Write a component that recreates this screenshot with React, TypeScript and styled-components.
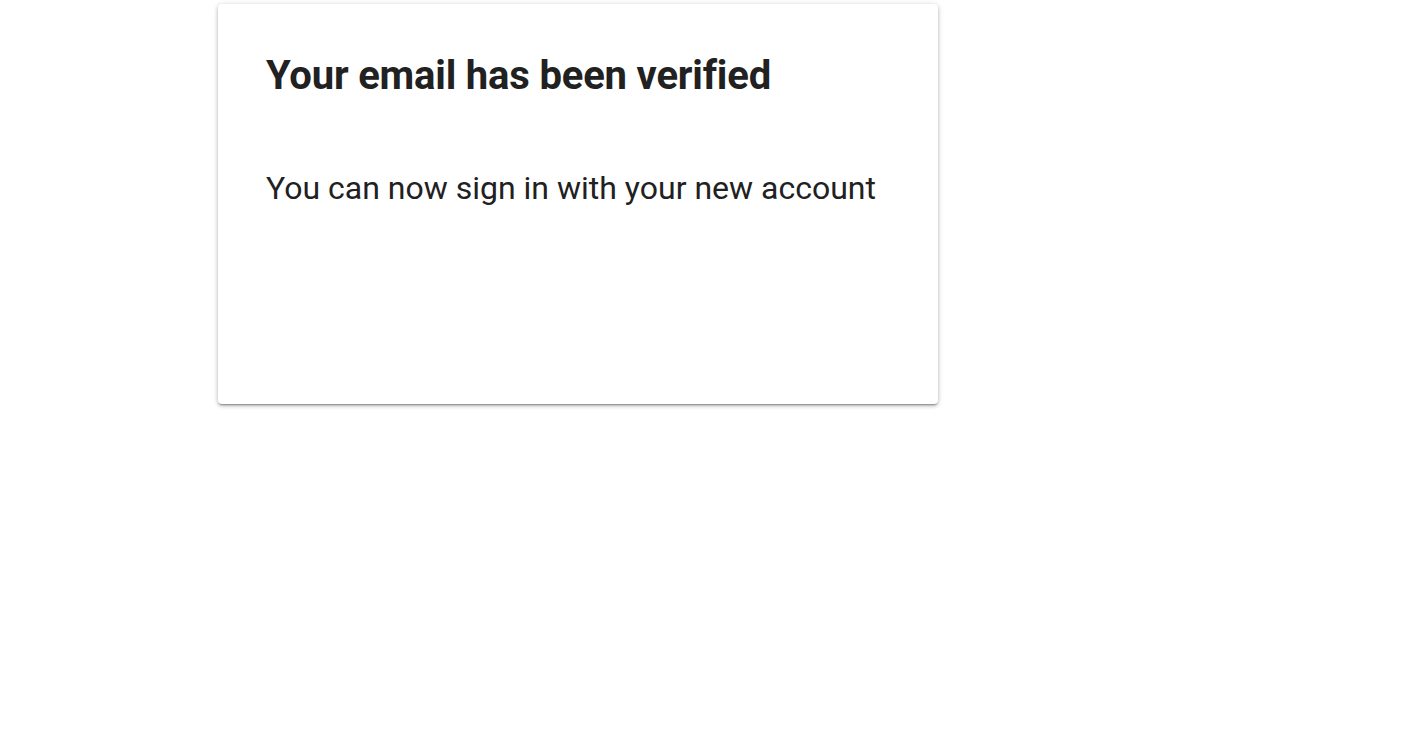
import React from "react";
import styled, {createGlobalStyle} from "styled-components";

const GlobalStyle = createGlobalStyle`
  html, body {
    margin: 0;
    padding: 0;
    background: #fff;
    font-family: Roboto, "Liberation Sans", sans-serif;
    color: #212121;
  }
`

const Page = styled.div`
  box-sizing: border-box;
  min-height: 100vh;
  padding: 4px 0 0 218px;
`

const Card = styled.div`
  box-sizing: border-box;
  width: 720px;
  height: 400px;
  padding: 48px 48px;
  background: #fff;
  border-radius: 4px;
  box-shadow: 0 2px 2px -1px rgba(0, 0, 0, .35),
  0 2px 4px 0 rgba(0, 0, 0, .2),
  0 0 6px 0 rgba(0, 0, 0, .1);
`

const Title = styled.h1`
  margin: 0;
  font-size: 40px;
  font-weight: 700;
  letter-spacing: -0.18px;
  line-height: 48px;
`

const Message = styled.p`
  margin: 68px 0 0;
  font-size: 32px;
  font-weight: 400;
  line-height: 40px;
`

function App() {
    return (
        <Page>
            <GlobalStyle/>
            <Card>
                <Title>Your email has been verified</Title>
                <Message>You can now sign in with your new account</Message>
            </Card>
        </Page>
    );
}

export default App;
